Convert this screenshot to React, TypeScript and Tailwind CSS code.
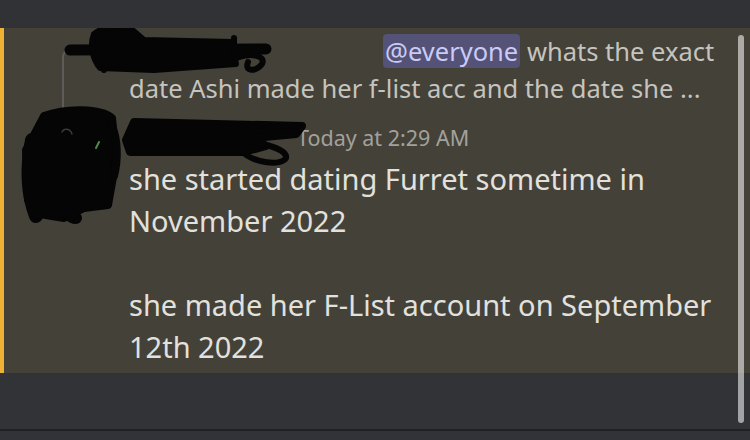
import React from 'react'

const font = { fontFamily: '"Noto Sans", "Open Sans", sans-serif' }

// black marker scribbles that hide names and avatar
function Scribbles() {
  return (
    <svg className="absolute left-0 top-0 pointer-events-none" width="750" height="345" viewBox="0 28 750 345" fill="#050505" stroke="#050505" strokeLinecap="round" strokeLinejoin="round">
      {/* reply author */}
      <path d="M66 50 L262 49" strokeWidth="11" fill="none" />
      <path d="M90 34 C100 26 118 24 126 28 L140 40 L228 42 L232 64 L150 70 L96 68 C88 58 86 44 90 34 Z" strokeWidth="6" />
      <path d="M124 24 L126 38" strokeWidth="8" fill="none" />
      <path d="M230 38 L230 48" strokeWidth="6" fill="none" />
      <path d="M232 58 C248 52 262 56 258 64 C252 72 240 72 244 62" strokeWidth="6" fill="none" />
      <path d="M100 70 C102 62 108 60 112 66" strokeWidth="6" fill="none" />
      {/* avatar */}
      <path d="M40 116 C62 108 96 108 108 118 L112 160 L104 205 L80 208 L60 218 L36 214 L24 200 L22 150 Z" strokeWidth="8" />
      <path d="M28 140 C22 170 24 195 32 216" strokeWidth="14" fill="none" />
      <path d="M60 200 C62 212 66 218 72 218" strokeWidth="12" fill="none" />
      <path d="M100 150 C104 180 100 196 96 204" strokeWidth="10" fill="none" />
      <path d="M108 126 C114 140 114 160 110 176" strokeWidth="8" fill="none" />
      <path d="M92 148 L95 142" stroke="#4f8a4a" strokeWidth="2" fill="none" />
      <path d="M58 132 C60 128 66 128 68 134" stroke="#3a3a3a" strokeWidth="1.5" fill="none" />
      {/* username */}
      <path d="M130 122 L298 126 L292 134 L250 138 L262 146 L240 152 L126 152 L122 140 Z" strokeWidth="8" />
      <path d="M232 142 C250 140 284 148 282 158 C278 166 250 164 236 150" strokeWidth="6" fill="none" />
    </svg>
  )
}

export default function App() {
  return (
    <div className="w-[750px] h-[440px] bg-[#313338] flex flex-col overflow-hidden relative" style={font}>
      <div className="h-[28px] bg-[#303236] shrink-0" />

      <div className="h-[345px] shrink-0 bg-[#444139] border-l-4 border-[#f0b232] relative pl-[125px] pr-[30px]">
        <div className="absolute left-[58px] top-[21px] w-[34px] h-[62px] border-l-2 border-t-2 border-[#5e5c58] rounded-tl-lg" />

        <p className="pt-[5px] text-[25.5px] leading-[37px] text-[#c6c4be] indent-[254px] whitespace-nowrap">
          <span className="bg-[#545276] text-[#c9cbf6] rounded-[4px] px-[2px]">@everyone</span> whats the exact
          <br />
          date Ashi made her f-list acc and the date she ...
        </p>

        <div className="mt-[11px] h-[40px] leading-[40px] pl-[168px] text-[21.5px] text-[#a3a19c]">Today at 2:29 AM</div>

        <div className="text-[29px] leading-[42px] text-[#e2e1dd]">
          <p>she started dating Furret sometime in</p>
          <p>November 2022</p>
          <p className="h-[42px]" />
          <p>she made her F-List account on September</p>
          <p>12th 2022</p>
        </div>

        <Scribbles />
      </div>

      <div className="flex-1 bg-[#323337]" />
      <div className="h-[2px] bg-[#202125] shrink-0" />
      <div className="h-[9px] bg-[#313338] shrink-0" />

      <div className="absolute left-[738px] top-[35px] w-[6px] h-[388px] rounded-full bg-white/55" />
    </div>
  )
}
